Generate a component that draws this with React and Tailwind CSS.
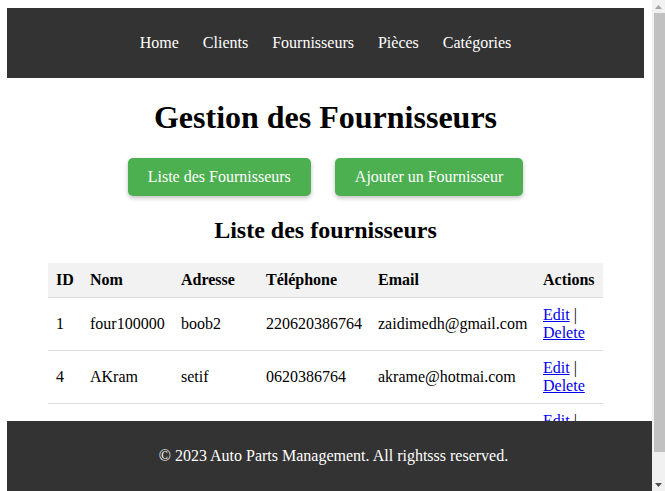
import React from "react";

const navLinks = ["Home", "Clients", "Fournisseurs", "Pièces", "Catégories"];

const fournisseurs = [
  { id: 1, nom: "four100000", adresse: "boob2", telephone: "220620386764", email: "zaidimedh@gmail.com" },
  { id: 4, nom: "AKram", adresse: "setif", telephone: "0620386764", email: "akrame@hotmai.com" },
  { id: 5, nom: "sami", adresse: "alger", telephone: "0550123456", email: "sami@gmail.com" },
];

const App = () => {
  return (
    <div
      className="bg-white text-black pl-[7px] pr-[21px] pt-2 pb-[64px] text-[16px] leading-[18px]"
      style={{ fontFamily: '"Liberation Serif", "Times New Roman", serif' }}
    >
      <header className="bg-[#333333] h-[70px] flex items-center justify-center">
        <nav>
          <ul className="flex">
            {navLinks.map((link) => (
              <li key={link} className="mx-3">
                <a href="#" className="text-white">
                  {link}
                </a>
              </li>
            ))}
          </ul>
        </nav>
      </header>

      <main className="flex flex-col items-center">
        <h1 className="text-[32px] font-bold leading-[37px] mt-[21px] mb-[22px]">
          Gestion des Fournisseurs
        </h1>
        <div className="flex gap-6">
          <button className="bg-[#4CAF50] text-white rounded-[5px] px-5 h-[38px] shadow-[0_2px_4px_rgba(0,0,0,0.25)]">
            Liste des Fournisseurs
          </button>
          <button className="bg-[#4CAF50] text-white rounded-[5px] px-5 h-[38px] shadow-[0_2px_4px_rgba(0,0,0,0.25)]">
            Ajouter un Fournisseur
          </button>
        </div>
        <h2 className="text-[24px] font-bold leading-[28px] mt-[20px] mb-[19px]">
          Liste des fournisseurs
        </h2>
        <table className="table-fixed w-[555px] border-collapse">
          <colgroup>
            <col className="w-[34px]" />
            <col className="w-[91px]" />
            <col className="w-[85px]" />
            <col className="w-[112px]" />
            <col className="w-[165px]" />
            <col className="w-[68px]" />
          </colgroup>
          <thead>
            <tr className="bg-[#f2f2f2] border-b border-[#dddddd]">
              <th className="text-left p-2 font-bold">ID</th>
              <th className="text-left p-2 font-bold">Nom</th>
              <th className="text-left p-2 font-bold">Adresse</th>
              <th className="text-left p-2 font-bold">Téléphone</th>
              <th className="text-left p-2 font-bold">Email</th>
              <th className="text-left p-2 font-bold">Actions</th>
            </tr>
          </thead>
          <tbody>
            {fournisseurs.map((f) => (
              <tr key={f.id} className="border-b border-[#dddddd]">
                <td className="p-2 align-middle">{f.id}</td>
                <td className="p-2 align-middle">{f.nom}</td>
                <td className="p-2 align-middle">{f.adresse}</td>
                <td className="p-2 align-middle">{f.telephone}</td>
                <td className="p-2 align-middle">{f.email}</td>
                <td className="p-2 align-middle">
                  <a href="#" className="text-[#0000EE] underline">Edit</a> |{" "}
                  <a href="#" className="text-[#0000EE] underline">Delete</a>
                </td>
              </tr>
            ))}
          </tbody>
        </table>
      </main>

      <footer className="fixed bottom-0 left-[7px] right-[5px] h-[70px] bg-[#333333] text-white flex items-center justify-center">
        <p>© 2023 Auto Parts Management. All rightsss reserved.</p>
      </footer>

      {/* scrollbar look-alike */}
      <div className="fixed top-0 right-0 bottom-0 w-[13px] bg-[#f1f1f1] flex flex-col z-10">
        <div className="h-[13px] flex items-center justify-center">
          <svg width="7" height="4" viewBox="0 0 7 4">
            <path d="M0 4 L3.5 0 L7 4 Z" fill="#a3a3a3" />
          </svg>
        </div>
        <div className="h-[439px] ml-[2px] bg-[#c1c1c1]" />
        <div className="flex-1" />
        <div className="h-[13px] flex items-center justify-center">
          <svg width="7" height="4" viewBox="0 0 7 4">
            <path d="M0 0 L7 0 L3.5 4 Z" fill="#505050" />
          </svg>
        </div>
      </div>
    </div>
  );
};

export default App;
